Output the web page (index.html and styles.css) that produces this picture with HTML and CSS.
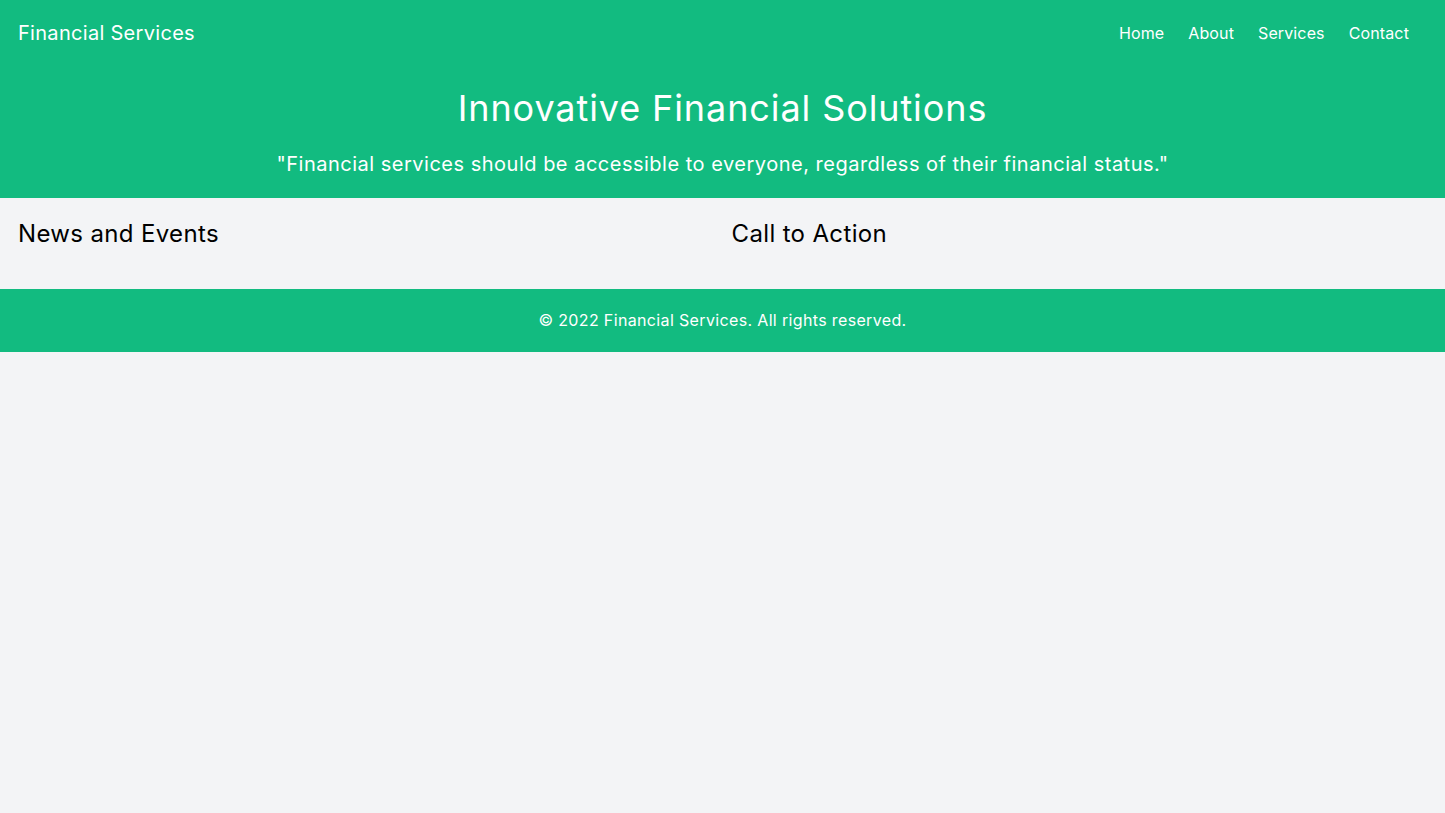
FILE: index.html
```html
<!DOCTYPE html>
<html lang="en">
<head>
<meta charset="utf-8">
<title>Financial Services</title>
<link rel="stylesheet" href="styles.css">
</head>
<body>
<header class="site-header">
  <nav class="nav">
    <div class="brand">Financial Services</div>
    <ul class="nav-links">
      <li><a href="#">Home</a></li>
      <li><a href="#">About</a></li>
      <li><a href="#">Services</a></li>
      <li><a href="#">Contact</a></li>
    </ul>
  </nav>
  <div class="hero">
    <h1 class="hero-title">Innovative Financial Solutions</h1>
    <p class="hero-quote">"Financial services should be accessible to everyone, regardless of their financial status."</p>
  </div>
</header>
<main class="main">
  <section class="col">
    <h2 class="col-title">News and Events</h2>
  </section>
  <section class="col">
    <h2 class="col-title">Call to Action</h2>
  </section>
</main>
<footer class="footer">
  <p>© 2022 Financial Services. All rights reserved.</p>
</footer>
</body>
</html>
```

FILE: styles.css
```css
* { box-sizing: border-box; }
html, body { margin: 0; padding: 0; }
body {
  font-family: Inter, sans-serif;
  letter-spacing: 0.022em;
  background: #f3f4f6;
  color: #000;
  min-height: 100vh;
}
.site-header {
  background: #12bb80;
  color: #fff;
}
.nav {
  display: flex;
  justify-content: space-between;
  align-items: center;
  padding: 19px 36px 19px 18px;
}
.brand {
  font-size: 20px;
  line-height: 28px;
  letter-spacing: 0.015em;
}
.nav-links {
  display: flex;
  gap: 24px;
  list-style: none;
  margin: 0;
  padding: 0;
}
.nav-links a {
  color: #fff;
  text-decoration: none;
  font-size: 16px;
  line-height: 24px;
  letter-spacing: 0.008em;
}
.hero {
  text-align: center;
  padding: 22px 16px 20px;
}
.hero-title {
  margin: 0 0 22px;
  font-size: 36px;
  line-height: 40px;
  font-weight: 400;
  letter-spacing: 0.025em;
}
.hero-quote {
  margin: 0;
  font-size: 20px;
  line-height: 28px;
  letter-spacing: 0.025em;
}
.main {
  display: grid;
  grid-template-columns: 1fr 1fr;
  gap: 16px;
  padding: 20px 16px 39px 18px;
}
.col-title {
  margin: 0;
  font-size: 24px;
  line-height: 32px;
  font-weight: 400;
}
.footer {
  background: #12bb80;
  color: #fff;
  text-align: center;
  padding: 19px 16px 20px;
}
.footer p {
  margin: 0;
  font-size: 16px;
  line-height: 24px;
}
```
